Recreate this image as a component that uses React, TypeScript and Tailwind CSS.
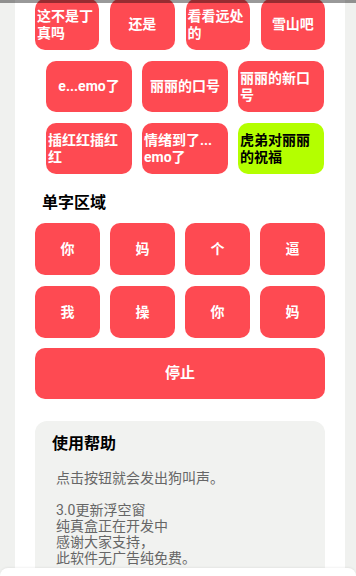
const phraseRow1 = ['这不是丁真吗', '还是', '看看远处的', '雪山吧']
const phraseRow2 = ['e...emo了', '丽丽的口号', '丽丽的新口号']
const phraseRow3 = ['插红红插红红', '情绪到了...\u200bemo了', '虎弟对丽丽的祝福']
const singleChars = ['你', '妈', '个', '逼', '我', '操', '你', '妈']

function SoundButton({ label, green = false, wide = false }: { label: string; green?: boolean; wide?: boolean }) {
  return (
    <button
      type="button"
      className={`flex items-center justify-center rounded-[10px] px-[2px] text-[14px] leading-[17px] font-bold ${
        green ? 'bg-[#b4ff00] text-black' : 'bg-[#fe4a52] text-white'
      } ${wide ? 'h-[51px] w-[86px]' : 'h-[51px]'}`}
    >
      <span className="text-left">{label}</span>
    </button>
  )
}

export default function App() {
  return (
    <div
      className="relative h-[576px] w-[356px] overflow-hidden bg-[#f0f1ef] pl-[15px]"
      style={{ fontFamily: 'Roboto, "Noto Sans CJK SC", "Noto Sans", sans-serif' }}
    >
      {/* white panel */}
      <div className="-mt-px h-[600px] w-[330px] bg-white px-[20px]">
        {/* phrase area */}
        <div className="grid grid-cols-4 gap-[11px]">
          {phraseRow1.map((p) => (
            <SoundButton key={p} label={p} />
          ))}
        </div>
        <div className="mt-[11px] flex justify-end gap-[10px] pr-px">
          {phraseRow2.map((p) => (
            <SoundButton key={p} label={p} wide />
          ))}
        </div>
        <div className="mt-[11px] flex justify-end gap-[10px] pr-px">
          {phraseRow3.map((p, i) => (
            <SoundButton key={p} label={p} wide green={i === 2} />
          ))}
        </div>

        {/* single char area */}
        <h2 className="mt-[19px] pl-[7px] text-[16px] leading-[20px] font-bold text-black">单字区域</h2>
        <div className="mt-[10px] grid grid-cols-4 gap-x-[10px] gap-y-[11px]">
          {singleChars.map((c, i) => (
            <button
              key={i}
              type="button"
              className="flex h-[52px] items-center justify-center rounded-[10px] bg-[#fe4a52] text-[14px] font-bold text-white"
            >
              {c}
            </button>
          ))}
        </div>
        <button
          type="button"
          className="mt-[10px] flex h-[51px] w-full items-center justify-center rounded-[10px] bg-[#fe4a52] text-[15px] font-bold text-white"
        >
          停止
        </button>

        {/* help */}
        <div className="mt-[22px] rounded-[12px] bg-[#f1f2f0] pt-[13px] pr-4 pb-6 pl-[17px]">
          <h3 className="text-[16px] leading-[20px] font-bold text-black">使用帮助</h3>
          <p className="mt-[16px] pl-[4px] text-[14px] leading-[16px] whitespace-pre-line text-[#666666]">
            {'点击按钮就会发出狗叫声。\n\n3.0更新浮空窗\n纯真盒正在开发中\n感谢大家支持，\n此软件无广告纯免费。'}
          </p>
        </div>
      </div>

      {/* top scroll shade */}
      <div className="absolute inset-x-0 top-0 h-[3px] bg-black/40" />

      {/* bottom sheet edge */}
      <div className="absolute inset-x-0 bottom-0 h-[8px] rounded-t-[16px] bg-white shadow-[0_-1px_2px_rgba(0,0,0,0.05)]" />
    </div>
  )
}
